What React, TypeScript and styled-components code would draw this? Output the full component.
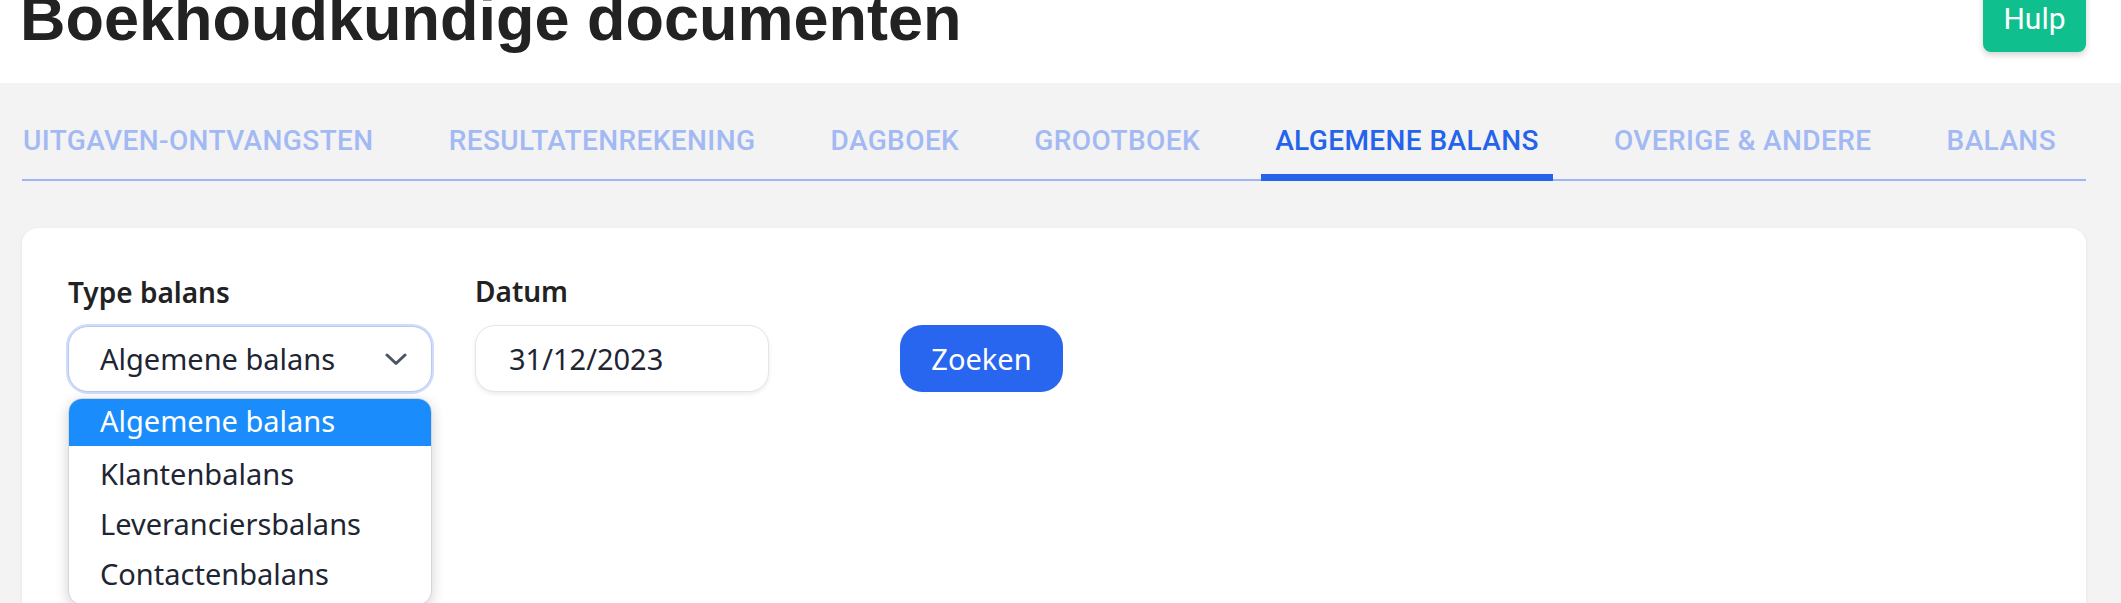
import styled, { createGlobalStyle } from "styled-components";

const GlobalStyle = createGlobalStyle`
  html, body {
    margin: 0;
    padding: 0;
    height: 603px;
    overflow: hidden;
    background: #f3f3f3;
  }
  * {
    box-sizing: border-box;
  }
`;

const tabs = [
  "UITGAVEN-ONTVANGSTEN",
  "RESULTATENREKENING",
  "DAGBOEK",
  "GROOTBOEK",
  "ALGEMENE BALANS",
  "OVERIGE & ANDERE",
  "BALANS",
];

const options = [
  "Algemene balans",
  "Klantenbalans",
  "Leveranciersbalans",
  "Contactenbalans",
];

const Chevron = () => (
  <svg width="22" height="13" viewBox="0 0 22 13" fill="none">
    <polyline
      points="2,2 11,10.5 20,2"
      stroke="#4b5565"
      strokeWidth="3"
      strokeLinecap="round"
      strokeLinejoin="round"
    />
  </svg>
);

const App = () => {
  return (
    <Page>
      <GlobalStyle />
      <Header>
        <Title>Boekhoudkundige documenten</Title>
        <HelpButton>Hulp</HelpButton>
      </Header>
      <Main>
        <TabList>
          <TabRow>
            {tabs.map((t) => (
              <Tab key={t} active={t === "ALGEMENE BALANS"}>
                {t}
              </Tab>
            ))}
          </TabRow>
        </TabList>
        <Card>
          <Form>
            <Field>
              <Label>Type balans</Label>
              <SelectWrap>
                <Select>
                  <span>Algemene balans</span>
                  <Chevron />
                </Select>
                <Menu>
                  {options.map((o, i) => (
                    <Option key={o} selected={i === 0}>
                      {o}
                    </Option>
                  ))}
                </Menu>
              </SelectWrap>
            </Field>
            <Field>
              <Label>Datum</Label>
              <DateInput>31/12/2023</DateInput>
            </Field>
            <SearchButton>Zoeken</SearchButton>
          </Form>
        </Card>
      </Main>
    </Page>
  );
};

export default App;

const Page = styled.div`
  width: 2121px;
  height: 603px;
  overflow: hidden;
  background: #f3f3f3;
`;

const Header = styled.header`
  height: 83px;
  background: #ffffff;
  display: flex;
  justify-content: space-between;
  align-items: flex-start;
  padding: 0 35px 0 20px;
  overflow: hidden;
`;

const Title = styled.h1`
  margin: -13px 0 0;
  font-family: "Liberation Sans", Arial, sans-serif;
  font-weight: 700;
  font-size: 63px;
  line-height: 63px;
  color: #222222;
`;

const HelpButton = styled.button`
  margin-top: -14px;
  height: 66px;
  width: 103px;
  border: none;
  border-radius: 8px;
  background: #10bf8e;
  color: #ffffff;
  font-family: Roboto, "Liberation Sans", sans-serif;
  font-size: 30px;
  line-height: 30px;
  padding: 0;
  box-shadow: 0 3px 6px rgba(0, 0, 0, 0.18);
  cursor: pointer;
`;

const Main = styled.main`
  padding: 0 35px 0 22px;
`;

const TabList = styled.nav`
  margin-top: 42px;
  border-bottom: 2px solid #9db6f6;
`;

const TabRow = styled.div`
  display: flex;
  justify-content: space-between;
  margin: 0 16px 0 -13px;
`;

const Tab = styled.div<{ active?: boolean }>`
  font-family: Roboto, "Liberation Sans", sans-serif;
  font-weight: 500;
  font-size: 28px;
  letter-spacing: 0.4px;
  line-height: 32px;
  padding: 0 14px 17px;
  margin-bottom: -2px;
  border-bottom: 7px solid ${({ active }) => (active ? "#2563eb" : "transparent")};
  color: ${({ active }) => (active ? "#2563eb" : "#a2b9f3")};
  white-space: nowrap;
  cursor: pointer;
`;

const Card = styled.section`
  margin-top: 47px;
  min-height: 420px;
  background: #ffffff;
  border-radius: 16px;
  box-shadow: 0 1px 4px rgba(0, 0, 0, 0.06);
  padding: 44px 46px;
`;

const Form = styled.div`
  display: flex;
  align-items: flex-end;
  gap: 43px;
`;

const Field = styled.div`
  display: flex;
  flex-direction: column;
`;

const Label = styled.label`
  font-family: "Noto Sans", "Open Sans", sans-serif;
  font-weight: 600;
  font-size: 28px;
  line-height: 38px;
  color: #222222;
  margin-bottom: 15px;
`;

const SelectWrap = styled.div`
  position: relative;
`;

const Select = styled.div`
  width: 364px;
  height: 66px;
  border: 1px solid #b9c9f4;
  border-radius: 20px;
  background: #ffffff;
  box-shadow: 0 0 0 2px rgba(120, 155, 240, 0.35);
  display: flex;
  align-items: center;
  justify-content: space-between;
  padding: 0 24px 0 31px;
  font-family: "Noto Sans", "Open Sans", sans-serif;
  font-size: 29px;
  line-height: 40px;
  color: #1e2533;
`;

const Menu = styled.ul`
  position: absolute;
  top: 72px;
  left: 0;
  width: 364px;
  margin: 0;
  padding: 0 0 5px;
  list-style: none;
  background: #ffffff;
  border: 1px solid #d4d6db;
  border-radius: 14px;
  overflow: hidden;
  box-shadow: 0 4px 14px rgba(0, 0, 0, 0.18);
  z-index: 2;
`;

const Option = styled.li<{ selected?: boolean }>`
  height: ${({ selected }) => (selected ? "47px" : "50px")};
  line-height: ${({ selected }) => (selected ? "44px" : "50px")};
  margin-bottom: ${({ selected }) => (selected ? "3px" : "0")};
  padding-left: 31px;
  font-family: "Noto Sans", "Open Sans", sans-serif;
  font-size: 29px;
  background: ${({ selected }) => (selected ? "#1a8cfb" : "transparent")};
  color: ${({ selected }) => (selected ? "#ffffff" : "#1e2533")};
`;

const DateInput = styled.div`
  width: 294px;
  height: 67px;
  border: 1px solid #e3e5e8;
  border-radius: 20px;
  background: #ffffff;
  box-shadow: 0 2px 4px rgba(0, 0, 0, 0.08);
  display: flex;
  align-items: center;
  padding-left: 33px;
  font-family: "Noto Sans", "Open Sans", sans-serif;
  font-size: 29px;
  line-height: 40px;
  color: #1e2533;
`;

const SearchButton = styled.button`
  margin-left: 88px;
  height: 67px;
  width: 163px;
  border: none;
  border-radius: 22px;
  background: #2866ef;
  color: #ffffff;
  font-family: "Noto Sans", "Open Sans", sans-serif;
  font-size: 29px;
  line-height: 40px;
  padding: 0;
  cursor: pointer;
`;
